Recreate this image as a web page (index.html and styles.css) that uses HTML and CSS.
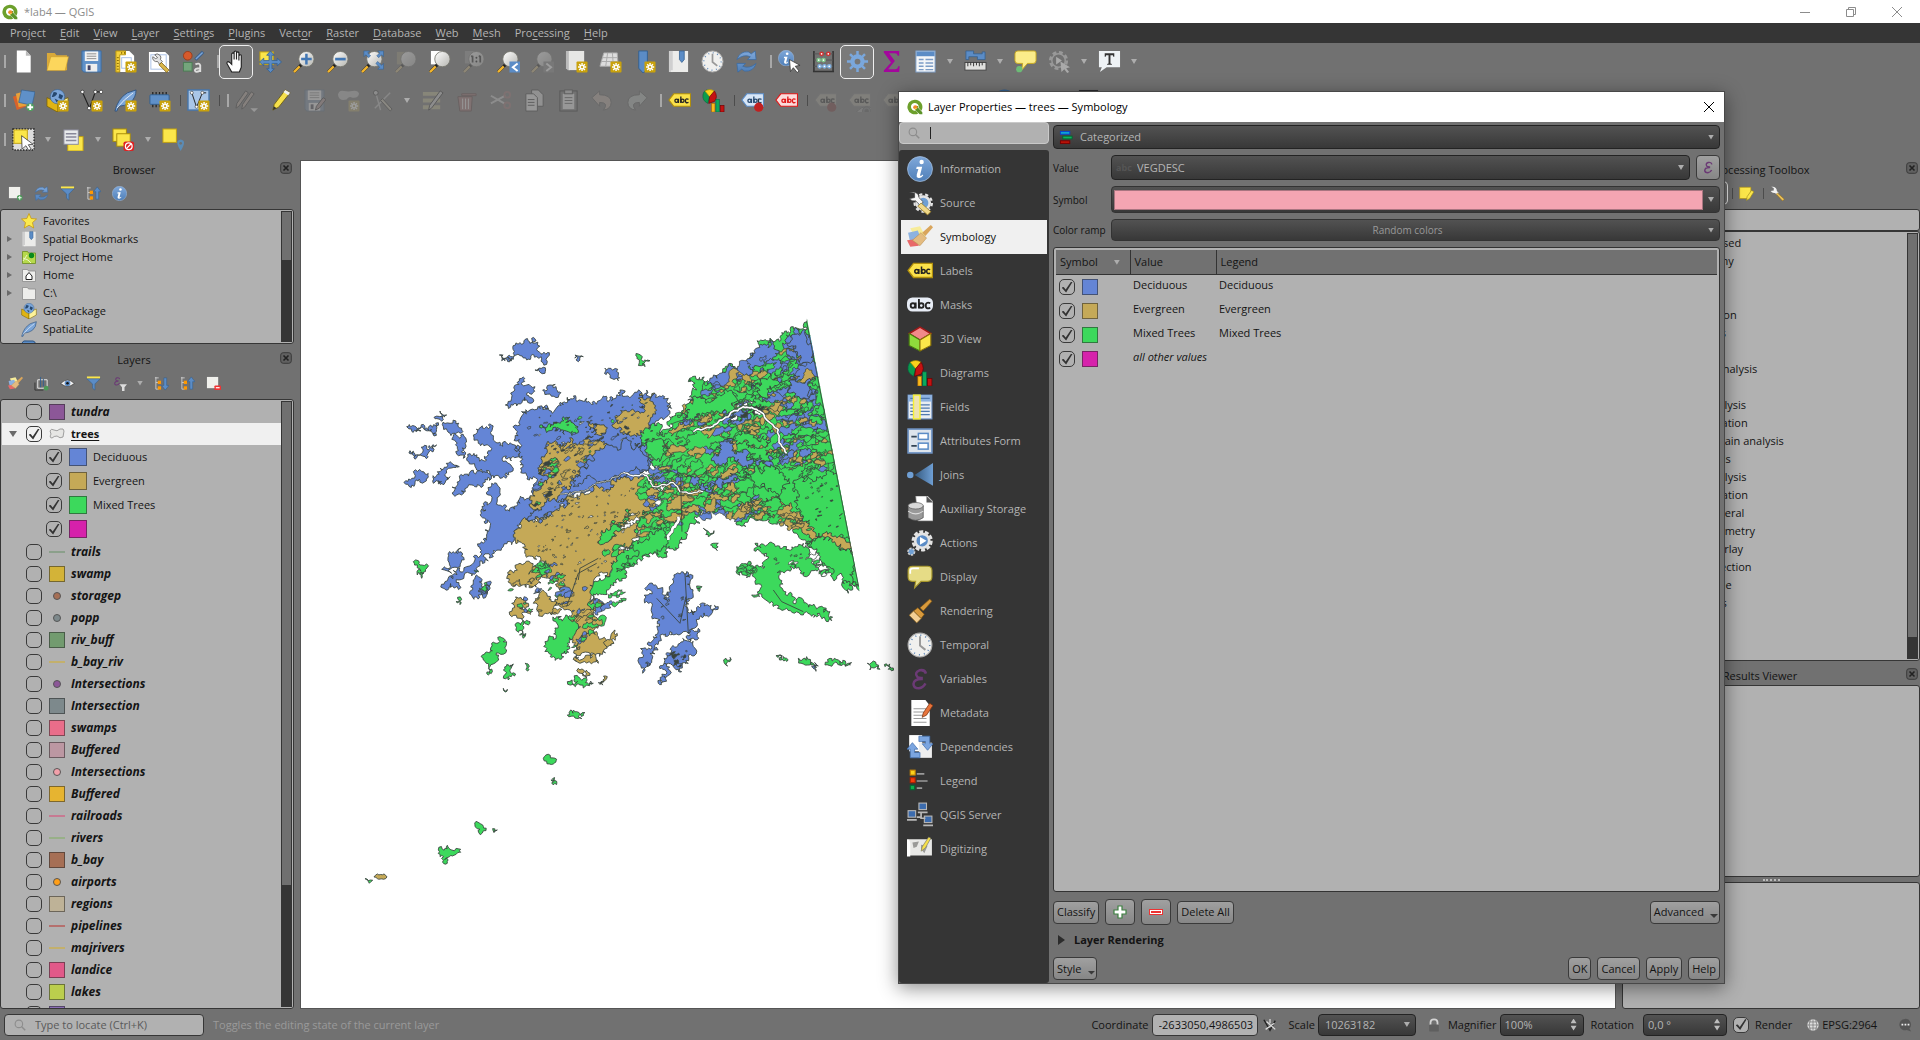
FILE: index.html
```html
<!DOCTYPE html>
<html lang="en">
<head>
<meta charset="utf-8">
<title>*lab4 — QGIS</title>
<link rel="stylesheet" href="styles.css">
</head>
<body>
<svg class="sprite" aria-hidden="true">
<defs>
<linearGradient id="lens" x1="0" y1="0" x2="1" y2="1"><stop offset="0" stop-color="#fff"/><stop offset="1" stop-color="#b5b5b0"/></linearGradient>
<linearGradient id="blueg" x1="0" y1="0" x2="0" y2="1"><stop offset="0" stop-color="#7fa8da"/><stop offset="1" stop-color="#4f7fb8"/></linearGradient>
<linearGradient id="joing" x1="0" y1="0" x2="1" y2="0"><stop offset="0" stop-color="#34597f"/><stop offset="1" stop-color="#6f9fd4"/></linearGradient>
</defs>
<symbol id="qgis" viewBox="0 0 24 24"><path d="M12 1a11 11 0 1 0 5 20.600l-4-4.200A5.800 5.800 0 1 1 17.400 13l4.200 4.500A11 11 0 0 0 12 1z" fill="#6da02c"/><path d="M12 10.500h5l-1 2 7 7.500V23h-4l-7-7z" fill="#5c9329"/><circle cx="12.500" cy="12.500" r="3.200" fill="#f08c28"/><path d="M11 14l2 2 2-2" fill="#f5d76a"/></symbol>
<symbol id="badge" viewBox="0 0 24 24"><rect x="12" y="12" width="11.500" height="11.500" rx="1" fill="#c9a20c"/><path d="M17.800 13.500v8.500M13.600 17.800h8.500M14.800 14.800l6 6M20.800 14.800l-6 6" stroke="#fff" stroke-width="1.500"/><circle cx="17.800" cy="17.800" r="1.200" fill="#c9a20c"/></symbol>
<symbol id="new" viewBox="0 0 24 24"><path d="M5 .500h9.500L19.500 6v17.500H5z" fill="#fff"/><path d="M14.500.500V6h5z" fill="#bbb"/></symbol>
<symbol id="open" viewBox="0 0 24 24"><path d="M1 3h8l2 2.500h11V21H1z" fill="#d9a93a"/><path d="M5 7h18.500L20 21.500H1z" fill="#fcd65c" stroke="#c99a2c" stroke-width=".6"/></symbol>
<symbol id="save" viewBox="0 0 24 24"><path d="M2 1h20v22H4l-2-2z" fill="#5f90c8" stroke="#3d6ea5"/><rect x="5" y="1.500" width="14" height="10" fill="#f2f2f2"/><path d="M7 4h10M7 6.500h10M7 9h10" stroke="#8c8c8c"/><rect x="6" y="14.500" width="12" height="8" fill="#eee"/><rect x="8" y="16" width="3" height="5" fill="#446"/></symbol>
<symbol id="layout" viewBox="0 0 24 24"><path d="M2 1h14l5 5v17H2z" fill="#fff"/><path d="M2 1h10v4H6v18H2z" fill="#f4cf3a" stroke="#b8940c"/><path d="M8 2v2M11 2v2M3 8h2M3 11h2M3 14h2M3 17h2M3 20h2" stroke="#886a00"/><rect x="8" y="8" width="10" height="11" fill="none" stroke="#a9c0e6"/><use href="#badge"/></symbol>
<symbol id="layoutmgr" viewBox="0 0 24 24"><path d="M1 2h17l4 4v17H1z" fill="#fff"/><rect x="3" y="5" width="16" height="15" fill="none" stroke="#a9c0e6"/><path d="M7 5a4 4 0 0 1 6 5l2 2-3 3-2-3a4 4 0 0 1-5-5l3 2 2-1z" fill="#e3e3e3" stroke="#555" stroke-width=".8"/><path d="M14 13l8 8-2.500 2.500-8-8z" fill="#d9b64a" stroke="#765b10" stroke-width=".8"/></symbol>
<symbol id="stylemgr" viewBox="0 0 24 24"><circle cx="6" cy="6" r="4.500" fill="#d65a2b" stroke="#9c3c18"/><path d="M14 10l8-8" stroke="#3a5f8c" stroke-width="3.500"/><path d="M14.500 9.500l7-7" stroke="#7ba5d8" stroke-width="1.500"/><rect x="1.500" y="13" width="9" height="9" fill="#74a57c" stroke="#4c7d55"/><path d="M14 15q4-2 5 1v7m0-4q-6 0-5.500 2.500t5.500 0" fill="none" stroke="#ddd" stroke-width="2"/></symbol>
<symbol id="hand" viewBox="0 0 24 24"><path d="M7 23l-5-9q0-3 3-1l2 2V4q1.500-2 2.500 0v6-8q1.500-2 2.500 0v8-7q1.500-2 2.500 0v8-5q2-2 2.500 0v12l-2 5z" fill="#fff" stroke="#222" stroke-width="1.200"/></symbol>
<symbol id="pansel" viewBox="0 0 24 24"><rect x="1" y="2" width="14" height="13" fill="#fbe64a" stroke="#c0a010"/><path d="M12 1l4 4.500h-2.500V11H19V8.500l4.500 4-4.500 4V14h-5.500v5.500H16L12 23.500 8 19.500h2.500V14H5v2.500L.500 12.500l4.500-4V11h5.500V5.500H8z" fill="#5b8cc6" stroke="#34608f" stroke-width=".8"/></symbol>
<symbol id="mag" viewBox="0 0 24 24"><path d="M1 23l8-8" stroke="#222" stroke-width="3"/><path d="M1 23l6-6" stroke="#f3b52c" stroke-width="2.500"/><circle cx="14" cy="9.500" r="8" fill="url(#lens)" stroke="#77776f" stroke-width=".9"/></symbol>
<symbol id="zoomin" viewBox="0 0 24 24"><use href="#mag"/><path d="M14 4v11M8.500 9.500h11" stroke="#4277b4" stroke-width="2.600"/></symbol>
<symbol id="zoomout" viewBox="0 0 24 24"><use href="#mag"/><path d="M8.500 9.500h11" stroke="#4277b4" stroke-width="2.800"/></symbol>
<symbol id="zoomfull" viewBox="0 0 24 24"><use href="#mag"/><path d="M3 1h6L7 3l3 3-2 2-3-3-2 2zM23.500 1v6l-2-2-3 3-2-2 3-3-2-2zM23.500 20h-6l2-2-4-4 2-2 4 4 2-2z" fill="#5b8cc6" stroke="#34608f" stroke-width=".6"/></symbol>
<symbol id="zoomsel" viewBox="0 0 24 24"><rect x="2" y="2" width="10" height="13" fill="#a59a50"/><use href="#mag"/></symbol>
<symbol id="zoomlayer" viewBox="0 0 24 24"><rect x="2" y="1" width="12" height="14" fill="#fff"/><use href="#mag"/></symbol>
<symbol id="zoomnative" viewBox="0 0 24 24"><rect x="2" y="1" width="10" height="13" fill="#999"/><use href="#mag"/><path d="M10 6v7M18 6v7M8.500 7L10 6M16.500 7L18 6" stroke="#222" stroke-width="1.800"/><circle cx="14" cy="8" r="1"/><circle cx="14" cy="12" r="1"/></symbol>
<symbol id="zoomlast" viewBox="0 0 24 24"><use href="#mag"/><rect x="13" y="12" width="11" height="11.500" fill="#5b8cc6"/><path d="M21.500 14l-5 4 5 4" fill="none" stroke="#fff" stroke-width="2"/></symbol>
<symbol id="zoomnext" viewBox="0 0 24 24"><use href="#mag"/><rect x="13" y="12" width="11" height="11.500" fill="#888"/><path d="M16 14l5 4-5 4" fill="none" stroke="#fff" stroke-width="2"/></symbol>
<symbol id="newmap" viewBox="0 0 24 24"><path d="M1 1h4v20H3l-2-2z" fill="#bbb"/><path d="M4 1h16v20H4z" fill="#e7e7e5"/><use href="#badge"/></symbol>
<symbol id="new3d" viewBox="0 0 24 24"><path d="M5 3h14l1 14H1z" fill="#ddd" stroke="#aaa"/><path d="M4 8h15M3 12h17M9 3L7 17M14 3l1 14" stroke="#aaa"/><use href="#badge"/></symbol>
<symbol id="newbook" viewBox="0 0 24 24"><path d="M6 1h9v19l-4.500 4-4.500-5z" fill="#5b8cc6" stroke="#34608f"/><use href="#badge"/></symbol>
<symbol id="books" viewBox="0 0 24 24"><path d="M2 1h5v22H2z" fill="#cfcfcf"/><path d="M6 1h16v22H4v-2h2z" fill="#ececea"/><path d="M13 1h5v9l-2.500 3L13 10z" fill="#5b8cc6" stroke="#34608f" stroke-width=".8"/></symbol>
<symbol id="clock" viewBox="0 0 24 24"><circle cx="12" cy="12" r="11" fill="#f0f0ee" stroke="#aaa"/><circle cx="12" cy="12" r="9" fill="none" stroke="#5c86b8" stroke-width="1.400" stroke-dasharray="1 3.710"/><path d="M12 4v8.500l5 4" fill="none" stroke="#999" stroke-width="1.800"/></symbol>
<symbol id="refresh" viewBox="0 0 24 24"><path d="M2 10q3-9 12-8l3 2 4-3 1 9h-9l3-3q-7-3-14 3zM22 14q-3 9-12 8l-3-2-4 3-1-9h9l-3 3q7 3 14-3z" fill="url(#blueg)" stroke="#3a6ba5" stroke-width=".8"/></symbol>
<symbol id="cursor" viewBox="0 0 24 24"><path d="M12 10l11 6-5 1 4 5-2 1.500-4-5-3 4z" fill="#fff" stroke="#333" stroke-width=".8"/></symbol>
<symbol id="info" viewBox="0 0 24 24"><circle cx="12" cy="12" r="11.500" fill="url(#blueg)" stroke="#a8c2e2" stroke-width=".7"/><circle cx="13.500" cy="5.500" r="2" fill="#fff"/><path d="M9 10h5l-2 8q1 1 2.500-1l.5 1q-2 3-5 2-1.500-.5-1-3l1.500-5H8.500z" fill="#fff"/></symbol>
<symbol id="identify" viewBox="0 0 24 24"><svg width="17" height="17" viewBox="0 0 24 24"><use href="#info"/></svg><use href="#cursor"/></symbol>
<symbol id="abacus" viewBox="0 0 24 24"><path d="M2 1v22M22 1v22M1 22.500h22" stroke="#333" stroke-width="1.600"/><path d="M2 4h20M2 10.500h20M2 17h20" stroke="#555"/><g stroke-width="1.600" fill="#fff"><circle cx="10" cy="4" r="1.700" stroke="#c33"/><circle cx="17" cy="4" r="1.700" stroke="#c33"/><circle cx="7" cy="10.500" r="1.700" stroke="#7fc48b"/><circle cx="12" cy="10.500" r="1.700" stroke="#7fc48b"/><circle cx="8" cy="17" r="1.700" stroke="#7fb0e0"/><circle cx="13" cy="17" r="1.700" stroke="#7fb0e0"/><circle cx="18" cy="17" r="1.700" stroke="#7fb0e0"/></g></symbol>
<symbol id="gear" viewBox="0 0 24 24"><path d="M12 1v22M1 12h22M4.200 4.200l15.600 15.600M19.800 4.200L4.200 19.800" stroke="#7aa7dc" stroke-width="2.600"/><circle cx="12" cy="12" r="7.500" fill="#7aa7dc"/><circle cx="12" cy="12" r="3" fill="#777"/></symbol>
<symbol id="sigma" viewBox="0 0 24 24"><path d="M4 1h16v5h-1.500q-.5-2.500-3-2.500H9.500l6 8-7 8.500H16q2.500 0 3-3h1.500l-.5 6H4v-1.500L11.500 13 4 2.500z" fill="#a3069c"/></symbol>
<symbol id="table" viewBox="0 0 24 24"><rect x="2" y="1" width="20" height="22" fill="#f4f6f8" stroke="#7b9cc6"/><rect x="2.500" y="1.500" width="19" height="5" fill="#5b8cc6"/><path d="M5 10h5M12 10h8M5 13.500h5M12 13.500h8M5 17h5M12 17h8M5 20.500h5M12 20.500h8" stroke="#7b9cc6" stroke-width="1.500"/></symbol>
<symbol id="measure" viewBox="0 0 24 24"><path d="M2 1h8v3h9V2h3v8h-8V7H5v3H2z" fill="#5b8cc6" stroke="#34608f" stroke-width=".8"/><rect x="1" y="13" width="22" height="8" fill="#e0e0de" stroke="#444"/><path d="M4 13v4M7 13v3M10 13v4M13 13v3M16 13v4M19 13v3" stroke="#333"/></symbol>
<symbol id="tip" viewBox="0 0 24 24"><path d="M4 1h17q2 0 2 2v8q0 3-3 3h-6l-6 7 1-7H4q-3 0-3-3V4q0-3 3-3z" fill="#fbec8a" stroke="#c8a820"/><circle cx="5.500" cy="20" r="3.300" fill="#6cbb76"/></symbol>
<symbol id="runact" viewBox="0 0 24 24"><circle cx="11" cy="11" r="8.500" fill="none" stroke="#999" stroke-width="3" stroke-dasharray="4 2.700"/><circle cx="11" cy="11" r="7" fill="none" stroke="#999" stroke-width="1.500"/><path d="M8.500 7v8l6-4z" fill="#aaa"/><path d="M13 12l10 6-4 1 3 4-2 1-3-4-3 3z" fill="#aaa"/></symbol>
<symbol id="textann" viewBox="0 0 24 24"><path d="M1 1h22v17H9l-7 5 2-5H1z" fill="#eef2f5"/><path d="M7 3.500h10v3.500h-1l-.5-1.500h-2.500v8.500l1.500.5v1h-5v-1l1.500-.5V5.500H8.500L8 7H7z" fill="#333"/></symbol>
<symbol id="datasrc" viewBox="0 0 24 24"><path d="M1 8l9-3 5 13-10 4z" fill="#d9622b"/><path d="M4 5l10-3 3 15-10 2z" fill="#e8a13a"/><path d="M10 1l14 2-3 14-14-3z" fill="#5f90c8" stroke="#34608f" stroke-width=".7"/><path d="M15 19h8M19 15v8" stroke="#52a060" stroke-width="5"/><path d="M16 19h6M19 16v6" stroke="#fff" stroke-width="2"/></symbol>
<symbol id="gpkg" viewBox="0 0 24 24"><path d="M1 9l11 5v10L1 18z" fill="#e0b414" stroke="#7c6200" stroke-width=".8"/><path d="M23 9l-11 5v10l11-6z" fill="#fdf39a" stroke="#7c6200" stroke-width=".8"/><circle cx="12" cy="8" r="7.500" fill="#7ba5d8" stroke="#34608f" stroke-width=".6"/><path d="M8 3q5 0 3 3t-5 2zM14 5l4 2-2 4-3-2zM9 10l4 2-2 2z" fill="#26486f"/></symbol>
<symbol id="gpkgnew" viewBox="0 0 24 24"><use href="#gpkg"/><use href="#badge"/></symbol>
<symbol id="shp" viewBox="0 0 24 24"><path d="M2 2l8 18L16 3h7" fill="none" stroke="#222" stroke-width="1.200"/><g fill="#fff" stroke="#333" stroke-width=".8"><circle cx="2.500" cy="3" r="1.800"/><circle cx="9.500" cy="20" r="1.800"/><circle cx="16" cy="3" r="1.800"/><circle cx="22" cy="3" r="1.800"/></g></symbol>
<symbol id="shpnew" viewBox="0 0 24 24"><use href="#shp"/><use href="#badge"/></symbol>
<symbol id="feather" viewBox="0 0 24 24"><path d="M1 23Q4 10 14 4l9-3q0 8-6 13-6 4-12 4l-2 5z" fill="#7ba5d8" stroke="#2c5280" stroke-width=".9"/><path d="M3 20Q10 11 20 4" stroke="#e8f0fa" fill="none"/></symbol>
<symbol id="feathernew" viewBox="0 0 24 24"><use href="#feather"/><use href="#badge"/></symbol>
<symbol id="chip" viewBox="0 0 24 24"><path d="M5 3v16M8.500 3v16M12 3v16M15.500 3v16M19 3v16" stroke="#222" stroke-width="1.300"/><rect x="2" y="6" width="20" height="10" rx="1" fill="#5f90c8" stroke="#34608f"/><use href="#badge"/></symbol>
<symbol id="virt" viewBox="0 0 24 24"><rect x="1" y="1" width="22" height="21" fill="#a9c6e8" stroke="#4775a8" stroke-width="1.500"/><path d="M5 4l5 15L16 4h4" fill="none" stroke="#222"/><g fill="#fff" stroke="#333" stroke-width=".6"><circle cx="5" cy="4" r="1.600"/><circle cx="10" cy="18.500" r="1.600"/><circle cx="16" cy="4" r="1.600"/></g><use href="#badge"/></symbol>
<symbol id="pencil" viewBox="0 0 24 24"><path d="M4 22l1.500-6L17 1l5 3-12 15z" fill="#f6e04b" stroke="#6e5d10" stroke-width=".9"/><path d="M17 1l5 3-2 2.500-5-3z" fill="#eee"/><path d="M4 22l1-4 3 2z" fill="#333"/></symbol>
<symbol id="pencils" viewBox="0 0 24 24"><path d="M1 20L2 15 11 2l3 2-10 14zM7 21l1-5L17 3l3 2-10 14z" fill="#c9a08a" stroke="#333"/><path d="M16 20h8l-4 4z" fill="#eee"/></symbol>
<symbol id="saveedit" viewBox="0 0 24 24"><use href="#save"/><path d="M13 22l1-4 7-9 3 2-7 9z" fill="#c88" stroke="#333"/></symbol>
<symbol id="addpoly" viewBox="0 0 24 24"><path d="M1 6q1-5 6-4t9 0q6-1 7 3-1 5-7 4-4-2-6 2-8 2-9-5z" fill="#bbb"/><use href="#badge"/></symbol>
<symbol id="vertex" viewBox="0 0 24 24"><path d="M5 4l5 18M4 20L20 4" stroke="#bbb" stroke-width="1.500"/><circle cx="5" cy="4" r="2.500" fill="#ccc" stroke="#333"/><path d="M12 10l10 11-2 2L10 12z" fill="#cb8" stroke="#333"/></symbol>
<symbol id="multi" viewBox="0 0 24 24"><path d="M2 3h18v4H2zM2 10h18v4H2zM2 17h18v4H2z" fill="#c8b850"/><path d="M8 22l1-5L20 2l3 2-12 16z" fill="#ccc" stroke="#222"/></symbol>
<symbol id="trash" viewBox="0 0 24 24"><path d="M3 8h15l-1 15H5zM7 5h15v2H7z" fill="#d66" stroke="#733"/><path d="M8 10v11M11 10v11M14 10v11" stroke="#eee"/></symbol>
<symbol id="cut" viewBox="0 0 24 24"><path d="M2 7l14 8M2 15l15-8" stroke="#ccc" stroke-width="2"/><circle cx="19" cy="6" r="3" fill="none" stroke="#c66" stroke-width="2"/><circle cx="19" cy="17" r="3" fill="none" stroke="#c66" stroke-width="2"/></symbol>
<symbol id="copy" viewBox="0 0 24 24"><path d="M9 1h7l5 5v12H9z" fill="#ddd" stroke="#333"/><path d="M3 5h8l4 4v14H3z" fill="#eee" stroke="#333"/><path d="M5 11h7M5 14h7M5 17h7" stroke="#333"/></symbol>
<symbol id="paste" viewBox="0 0 24 24"><rect x="3" y="2" width="18" height="21" fill="#777" stroke="#222"/><rect x="6" y="5" width="12" height="16" fill="#eee"/><path d="M8 9h8M8 12h8M8 15h8" stroke="#555"/><rect x="8" y="1" width="8" height="4" fill="#ccc" stroke="#333"/></symbol>
<symbol id="undo" viewBox="0 0 24 24"><path d="M1 9l8-7v4q12 0 12 8 0 7-8 8 6-8-4-8v4z" fill="#c8a48a" stroke="#555"/></symbol>
<symbol id="redo" viewBox="0 0 24 24"><path d="M23 9l-8-7v4Q3 6 3 14q0 7 8 8-6-8 4-8v4z" fill="#a9bcae" stroke="#555"/></symbol>
<symbol id="tag" viewBox="0 0 24 24"><path d="M1 11.500L6 5h17.500v13H6z" stroke="currentColor" stroke-width="1.200"/><g fill="none" stroke-width="1.400"><circle cx="8.900" cy="12.300" r="1.700"/><path d="M10.900 10.200V14.700M13.400 7.800v6.900M21.400 10.700q-3.200-1.300-3.200 1.600t3.200 1.700"/><circle cx="15.100" cy="12.300" r="1.700"/></g></symbol>
<symbol id="diagram" viewBox="0 0 24 24"><path d="M8 8V1Q2 0 1 6t5 9z" fill="#0c9b4c" stroke="#064" stroke-width=".6"/><path d="M8 8L3 2q5-3 10 0z" fill="#fbd21c" stroke="#a80" stroke-width=".6"/><path d="M8 8l5-6q4 6 0 11l-6 2z" fill="#c41212" stroke="#600" stroke-width=".6"/><rect x="10" y="15" width="3.500" height="9" fill="#fbb91c" stroke="#a60" stroke-width=".6"/><rect x="14.500" y="11" width="3.500" height="13" fill="#0cab5c" stroke="#064" stroke-width=".6"/><rect x="19" y="17" width="4" height="7" fill="#c41212" stroke="#600" stroke-width=".6"/></symbol>
<symbol id="pin" viewBox="0 0 24 24"><path d="M18 10v9" stroke="#333"/><circle cx="18.500" cy="19" r="4.800" fill="#c02020" stroke="none"/></symbol>
<symbol id="eye" viewBox="0 0 24 24"><path d="M1 12q11-11 22 0-11 9-22 0z" fill="#f0f0f0" stroke="#333"/><circle cx="12" cy="11.500" r="4.500" fill="#5b8cc6"/><circle cx="12" cy="11.500" r="2" fill="#111"/></symbol>
<symbol id="select" viewBox="0 0 24 24"><rect x="1" y="1" width="22" height="22" fill="#ddd" stroke="#222" stroke-width="1.400" stroke-dasharray="1.500 1.500"/><rect x="2" y="2" width="14" height="14" fill="#fbe64a" stroke="#c0a010"/><path d="M10 8l12 9-5 .5 3 4.500-2.500 1.500-3-5-4 3.500z" fill="#fff" stroke="#333" stroke-width=".8"/></symbol>
<symbol id="selform" viewBox="0 0 24 24"><rect x="6" y="9" width="16" height="15" fill="#fbe64a" stroke="#c0a010"/><rect x="2" y="2" width="15" height="15" fill="#e8eaec" stroke="#889"/><path d="M4 6h11M4 9.500h11M4 13h11" stroke="#889" stroke-width="1.600"/></symbol>
<symbol id="desel" viewBox="0 0 24 24"><rect x="1" y="1" width="14" height="13" fill="#fbe64a" stroke="#a88c08"/><rect x="5" y="6" width="14" height="13" fill="#fbe64a" stroke="#a88c08"/><rect x="12" y="14" width="11" height="10" rx="2" fill="#d22"/><circle cx="17.500" cy="19" r="3.500" fill="none" stroke="#fff" stroke-width="1.300"/><path d="M15 21.500l5-5" stroke="#fff" stroke-width="1.300"/></symbol>
<symbol id="selloc" viewBox="0 0 24 24"><rect x="1" y="1" width="14" height="14" fill="#fbe64a" stroke="#c0a010"/><path d="M19.500 24q-7-11 0-12 7 1 0 12z" fill="#5b8cb6"/><circle cx="19.500" cy="16" r="1.400" fill="#717171"/></symbol>
<symbol id="panelicon" viewBox="0 0 24 24"><rect x="2" y="1" width="20" height="21" fill="#2c2c30"/></symbol>
<symbol id="webglobe" viewBox="0 0 24 24"><circle cx="12" cy="12" r="11.500" fill="#34608f"/><circle cx="12" cy="12" r="9" fill="#7ba5d8"/></symbol>
<symbol id="addbox" viewBox="0 0 16 16"><rect x="1" y="1" width="12" height="12" fill="#f0f0ec"/><circle cx="12.500" cy="12.500" r="3" fill="#4c9a58"/><path d="M10.500 12.500h4M12.500 10.500v4" stroke="#fff"/></symbol>
<symbol id="rembox" viewBox="0 0 16 16"><rect x="1" y="1" width="12" height="12" fill="#f0f0ec"/><rect x="9" y="10" width="7" height="5" rx="1" fill="#e33"/><path d="M10.500 12.500h4" stroke="#fff" stroke-width="1.300"/></symbol>
<symbol id="funnel" viewBox="0 0 16 16"><path d="M1 3h14L9.500 8.500V15L7 13V8.500z" fill="#5b8cc6" stroke="#34608f" stroke-width=".6"/><path d="M1 1.500h14" stroke="#fbe64a" stroke-width="2"/></symbol>
<symbol id="collapse" viewBox="0 0 16 16"><path d="M2 1v13h3M2 7h3M1 2h4" stroke="#ccc" fill="none"/><rect x="4" y="5" width="3.500" height="3.500" fill="#f90"/><rect x="4" y="11" width="3.500" height="3.500" fill="#f90"/><path d="M12 1l4 5h-2.500v8h-3V6H8z" fill="#5b8cc6" stroke="#34608f" stroke-width=".6"/></symbol>
<symbol id="expand" viewBox="0 0 16 16"><path d="M2 1v13h3M2 7h3M1 2h4" stroke="#ccc" fill="none"/><rect x="4" y="5" width="3.500" height="3.500" fill="#f90"/><rect x="4" y="11" width="3.500" height="3.500" fill="#f90"/><path d="M12 15l4-5h-2.500V2h-3v8H8z" fill="#5b8cc6" stroke="#34608f" stroke-width=".6"/></symbol>
<symbol id="brush" viewBox="0 0 24 24"><path d="M21 1l2 2-8 9-3-3z" fill="#d99a3c" stroke="#7c5210" stroke-width=".6"/><path d="M10 9l6 6-3 4-7-7z" fill="#d99a3c" stroke="#7c5210" stroke-width=".6"/><path d="M6 12l7 7-4 4-7-7z" fill="#f3cf94" stroke="#8c6420" stroke-width=".7"/></symbol>
<symbol id="symbology" viewBox="0 0 24 24"><path d="M3 4l9-2 5 9-8 5z" fill="#f7ec9a"/><path d="M1 8l9-2 3 8-10 3z" fill="#8db2e0"/><path d="M0 15l8-1 3 6-8 1z" fill="#e86868"/><path d="M22 1l2 2-7 8-3-3z" fill="#d9a55c"/><path d="M13 8l5 5-6 7-7-5z" fill="#e4bb80" stroke="#b78b48" stroke-width=".5"/></symbol>
<symbol id="group" viewBox="0 0 16 16"><path d="M4 4h10v9H4z" fill="none" stroke="#eee"/><path d="M1 7v8h9" fill="none" stroke="#333"/><path d="M7 1v11M10 3v8" stroke="#34608f"/><circle cx="13" cy="13" r="2.500" fill="#4c9a58"/></symbol>
<symbol id="eps" viewBox="0 0 24 24"><path d="M17.500 7q-1-4-6-3-5 2-2 6 1 1 4 1v1q-7 0-7.500 4.500 0 4 5 4 4-.500 6-4.500" fill="none" stroke="#6b3a75" stroke-width="2.300"/></symbol>
<symbol id="epsf" viewBox="0 0 24 24"><svg width="17" height="17" viewBox="0 0 24 24"><use href="#eps"/></svg><path d="M12 13h12l-4 5v6h-4v-6z" fill="#ddd"/></symbol>
<symbol id="star" viewBox="0 0 16 16"><path d="M8 .5l2.200 5 5.300.5-4 3.600 1.200 5.400L8 12.200 3.300 15l1.200-5.400-4-3.600 5.300-.5z" fill="#fbe94e" stroke="#c99a0c" stroke-width=".8"/></symbol>
<symbol id="folder" viewBox="0 0 16 16"><path d="M1.500 2.500h5l1 1.500h7v10.500h-13z" fill="#ededeb" stroke="#8c8c8c" stroke-width=".8"/></symbol>
<symbol id="homef" viewBox="0 0 16 16"><use href="#folder"/><path d="M5 9l3-3.500L11 9v3.500H5z" fill="#fff" stroke="#222"/></symbol>
<symbol id="projf" viewBox="0 0 16 16"><path d="M1.500 2.500h5l1 1.500h7v10.500h-13z" fill="#b6d94c" stroke="#6c8c20" stroke-width=".8"/><path d="M2 9l5 2 3 3M6 6l-4 6" stroke="#eef6c8" fill="none"/><circle cx="10.500" cy="6.500" r="2.700" fill="#0a8a1c"/></symbol>
<symbol id="elephant" viewBox="0 0 16 16"><path d="M1 16V4q1-3 5-2h6q4 0 3 14z" fill="#5b8cc6" stroke="#2c5280"/></symbol>
<symbol id="polyicon" viewBox="0 0 16 16"><path d="M1 5q1-3 4-1t6-1q4-1 4 2l-1 6q-3 2-6-1-3 0-5 2-3 0-1-4z" fill="#e6e6e4" stroke="#8c8c8c" stroke-width=".8"/></symbol>
<symbol id="closex" viewBox="0 0 12 12"><rect x=".7" y=".7" width="10.600" height="10.600" rx="2.500" fill="#606060" stroke="#3a3a3a"/><path d="M3.500 3.500l5 5M8.500 3.500l-5 5" stroke="#222" stroke-width="1.600"/></symbol>
<symbol id="search" viewBox="0 0 16 16"><circle cx="6.500" cy="6.500" r="5" fill="none" stroke="#8d8d8d" stroke-width="1.500"/><path d="M10 10l5 5" stroke="#8d8d8d" stroke-width="2"/></symbol>
<symbol id="source" viewBox="0 0 24 24"><circle cx="15" cy="12" r="6" fill="#6f9fd4" stroke="#e4e4e4" stroke-width="2.500"/><circle cx="15" cy="12" r="8" fill="none" stroke="#e4e4e4" stroke-width="2" stroke-dasharray="3 2.600"/><path d="M2 2l5 1v4l-5 1q3 3 6 2l4 4 3-3-4-4q0-6-9-5z" fill="#f5f5f5" stroke="#353535" stroke-width=".6"/><path d="M13 12l9 8-3 3-9-8z" fill="#f0d888" stroke="#987a20" stroke-width=".7"/></symbol>
<symbol id="mask" viewBox="0 0 24 24"><rect x="0" y="5" width="24" height="13" rx="5" fill="#e8edf6"/><g fill="none" stroke="#222" stroke-width="1.700"><circle cx="5.500" cy="12.500" r="2.100"/><path d="M8 9.800V15.300M11 6.500v8.800M21.500 10.300q-4.200-1.500-4.200 2.200t4.200 2.200"/><circle cx="13.200" cy="12.500" r="2.100"/></g></symbol>
<symbol id="cube" viewBox="0 0 24 24"><path d="M12 1l10 6-10 6L2 7z" fill="#f28a8a" stroke="#a01818" stroke-width="1.400"/><path d="M2 7l10 6v10L2 18z" fill="#8fdc3c" stroke="#487c10"/><path d="M22 7l-10 6v10l10-5z" fill="#fbe64a" stroke="#8c7408"/></symbol>
<symbol id="fields" viewBox="0 0 24 24"><rect x="1" y="1" width="22" height="22" fill="#e9edf2" stroke="#6f93c4"/><path d="M1 1h22v6H1z" fill="#8db2e0"/><path d="M3 4h18M3 10h18M3 13h18M3 16h18M3 19h18" stroke="#4f79ae"/><rect x="6" y="1" width="6" height="22" fill="#eee3b0" stroke="#f6ee30" stroke-width="1.300"/></symbol>
<symbol id="form" viewBox="0 0 24 24"><rect x="1" y="1" width="22" height="22" fill="#dde4ec" stroke="#6f93c4" stroke-width="1.500"/><path d="M4 8h5M4 16.500h5" stroke="#345" stroke-width="1.600"/><rect x="10.500" y="5" width="9" height="5.500" fill="#fff" stroke="#5b8cc6" stroke-width="1.400"/><rect x="10.500" y="14" width="9" height="5.500" fill="#fff" stroke="#5b8cc6" stroke-width="1.400"/></symbol>
<symbol id="join" viewBox="0 0 24 24"><circle cx="3" cy="12" r="3" fill="#6f9fd4"/><path d="M7 12L24 1v21z" fill="url(#joing)"/></symbol>
<symbol id="storage" viewBox="0 0 24 24"><path d="M8 0h11l5 5v18H10z" fill="#fff" stroke="#777" stroke-width=".6"/><path d="M18 0v6h6z" fill="#555"/><path d="M1 9v11q7 5 14 0V9z" fill="#999" stroke="#444" stroke-width=".6"/><ellipse cx="8" cy="9" rx="7" ry="3" fill="#d8d8d8" stroke="#555" stroke-width=".6"/><path d="M1 14q7 5 14 0" fill="none" stroke="#ddd"/></symbol>
<symbol id="actions" viewBox="0 0 24 24"><circle cx="14" cy="10" r="8.500" fill="none" stroke="#e4e4e4" stroke-width="2.500" stroke-dasharray="3.700 1.600"/><circle cx="14" cy="10" r="6.500" fill="#5b8cc6" stroke="#e4e4e4" stroke-width="2.500"/><path d="M12 6.500v7l6-3.500z" fill="#fff"/><circle cx="4" cy="20" r="3" fill="#6f9fd4" stroke="#ccc" stroke-width="1.500" stroke-dasharray="2 1"/></symbol>
<symbol id="bubble" viewBox="0 0 24 24"><path d="M5 2h14q4 0 4 4v6q0 4-4 4h-6l-6 6 1-6H5q-4 0-4-4V6q0-4 4-4z" fill="#e6dc86" stroke="#a8982c"/><path d="M3 9V6q0-2 3-2h5" fill="none" stroke="#fff" stroke-width="1.600"/></symbol>
<symbol id="meta" viewBox="0 0 24 24"><path d="M4 0h13l4 5v19H4z" fill="#fff"/><path d="M6 8h12M6 11h10M6 14h9M6 17h12M6 20.500h12" stroke="#999"/><path d="M14 16l1-4 6-9 3 2-6 9z" fill="#e8743c" stroke="#7c3410" stroke-width=".7"/></symbol>
<symbol id="deps" viewBox="0 0 24 24"><rect x="2" y="1" width="12" height="15" fill="#fff"/><rect x="11" y="8" width="12" height="14" fill="#eee"/><path d="M11 2h10v7h3l-5 6-5-6h3V7h-6zM5 8l5 6H7v3h5v5H3v-8H0z" fill="#7ba5e0" stroke="#4470b0" stroke-width=".7"/></symbol>
<symbol id="legend" viewBox="0 0 24 24"><rect x="3" y="2" width="4.500" height="4.500" fill="#fbd21c" stroke="#c80"/><rect x="3" y="9" width="4.500" height="4.500" fill="#f43c0c" stroke="#a20"/><rect x="3" y="16" width="4" height="4" fill="#0cab4c" stroke="#063"/><path d="M9 5.500h7M9 12h10M9 18.500h5" stroke="#999" stroke-width="1.600"/></symbol>
<symbol id="server" viewBox="0 0 24 24"><g fill="#3c6cae" stroke="#b8b8b8"><rect x="11" y="1" width="7" height="6"/><rect x="1" y="8" width="7" height="6"/><rect x="16" y="13" width="7" height="6"/></g><path d="M10 9.500h9M0 16.500h9M15 21.500h9M13 10v5h4M9 14h4" stroke="#b8b8b8" stroke-width="1.600" fill="none"/></symbol>
<symbol id="digit" viewBox="0 0 24 24"><path d="M1 3h22v15H1z" fill="#e8e8e6"/><path d="M1 3q2 1 2 4v12H0V3z" fill="#fff"/><path d="M5 6l6-1-2 5-3 1zM13 8l6 1-3 7-3-4z" fill="#9a9a98"/><path d="M13 14l1-4 6-9 2 1-5 9z" fill="#f6e04b" stroke="#776" stroke-width=".6"/></symbol>
<symbol id="categ" viewBox="0 0 16 16"><rect x="1.500" y="1.500" width="10" height="3" fill="#0ca4d4" stroke="#0a40d0"/><rect x="4" y="6.500" width="10" height="3" fill="#0cb45c" stroke="#066030"/><rect x="1.500" y="11.500" width="10" height="3" fill="#b81208" stroke="#700"/></symbol>
<symbol id="plus" viewBox="0 0 16 16"><path d="M6 2h4v4h4v4h-4v4H6v-4H2V6h4z" fill="#fff" stroke="#3c8040" stroke-width="1.200"/></symbol>
<symbol id="minus" viewBox="0 0 16 16"><rect x="1.500" y="5.500" width="13" height="5" fill="#fff" stroke="#e33"/><path d="M3 8h10" stroke="#e33" stroke-width="2"/></symbol>
<symbol id="wrench" viewBox="0 0 24 24"><path d="M2 1l4 2v4l-5 1q3 4 7 3l3 3 3-3-3-3q0-6-6-7z" fill="#f2f2f2"/><path d="M12 11l11 10-3 3L10 13z" fill="#e8bf58" stroke="#8a6410" stroke-width=".8"/></symbol>
<symbol id="noteedit" viewBox="0 0 24 24"><path d="M1 2h18v15l-5 3H1z" fill="#fbe64a" stroke="#b09010"/><path d="M12 23l1-6 7-10 4 2-7 11z" fill="#fbe64a" stroke="#99861c"/></symbol>
<symbol id="lock" viewBox="0 0 16 16"><path d="M4 8V5q0-3.500 4-3.500T12 5v3" fill="none" stroke="#d4d4d4" stroke-width="2"/><rect x="2.500" y="7.500" width="11" height="8" rx="1" fill="#5f5f5f"/></symbol>
<symbol id="globe" viewBox="0 0 16 16"><circle cx="8" cy="8" r="6.500" fill="#ddd"/><path d="M1.500 8h13M8 1.500v13M3 4.500h10M3 11.500h10M5 2.500q-3 5.500 0 11M11 2.500q3 5.500 0 11" fill="none" stroke="#666" stroke-width=".7"/></symbol>
<symbol id="msgs" viewBox="0 0 16 16"><path d="M8 1a6.500 6.500 0 1 0 2 12.700l5 1.800-2-3.500A6.500 6.500 0 0 0 8 1z" fill="#555"/><path d="M4 7.500h2M7.500 7.500h2M11 7.500h2" stroke="#eee" stroke-width="2"/></symbol>
<symbol id="tracker" viewBox="0 0 16 16"><path d="M1 2l7 12L14 3" fill="none" stroke="#222" stroke-width="1.600"/><path d="M4 4l10 9M13 6L3 13M8 1v5" stroke="#ddd" stroke-width="1.400"/></symbol>
</svg>

<header class="titlebar">
  <svg class="logo"><use href="#qgis"/></svg>
  <span class="title">*lab4 — QGIS</span>
  <div class="winctl">
    <button aria-label="Minimize"><svg viewBox="0 0 10 10"><path d="M0 5.500h10"/></svg></button>
    <button aria-label="Restore"><svg viewBox="0 0 10 10"><path d="M.500 2.500h7v7h-7zM2.500 2.500v-2h7v7h-2"/></svg></button>
    <button aria-label="Close"><svg viewBox="0 0 10 10"><path d="M0 0l10 10M10 0L0 10"/></svg></button>
  </div>
</header>

<nav class="menubar">
  <button>Pro<u>j</u>ect</button><button><u>E</u>dit</button><button><u>V</u>iew</button><button><u>L</u>ayer</button><button><u>S</u>ettings</button><button><u>P</u>lugins</button><button>Vect<u>o</u>r</button><button><u>R</u>aster</button><button><u>D</u>atabase</button><button><u>W</u>eb</button><button><u>M</u>esh</button><button>Pro<u>c</u>essing</button><button><u>H</u>elp</button>
</nav>

<div class="toolbars">
  <div class="toolrow">
    <i class="grip first"></i>
    <button class="tool" aria-label="New Project"><svg><use href="#new"/></svg></button>
    <button class="tool" aria-label="Open Project"><svg><use href="#open"/></svg></button>
    <button class="tool" aria-label="Save Project"><svg><use href="#save"/></svg></button>
    <button class="tool" aria-label="New Print Layout"><svg><use href="#layout"/></svg></button>
    <button class="tool" aria-label="Layout Manager"><svg><use href="#layoutmgr"/></svg></button>
    <button class="tool" aria-label="Style Manager"><svg><use href="#stylemgr"/></svg></button>
    <i class="grip"></i>
    <button class="tool pressed" aria-label="Pan Map"><svg><use href="#hand"/></svg></button>
    <button class="tool" aria-label="Pan to Selection"><svg><use href="#pansel"/></svg></button>
    <button class="tool" aria-label="Zoom In"><svg><use href="#zoomin"/></svg></button>
    <button class="tool" aria-label="Zoom Out"><svg><use href="#zoomout"/></svg></button>
    <button class="tool" aria-label="Zoom Full"><svg><use href="#zoomfull"/></svg></button>
    <button class="tool" disabled aria-label="Zoom to Selection"><svg><use href="#zoomsel"/></svg></button>
    <button class="tool" aria-label="Zoom to Layer"><svg><use href="#zoomlayer"/></svg></button>
    <button class="tool" disabled aria-label="Zoom to Native Resolution"><svg><use href="#zoomnative"/></svg></button>
    <button class="tool" aria-label="Zoom Last"><svg><use href="#zoomlast"/></svg></button>
    <button class="tool" disabled aria-label="Zoom Next"><svg><use href="#zoomnext"/></svg></button>
    <button class="tool" aria-label="New Map View"><svg><use href="#newmap"/></svg></button>
    <button class="tool" aria-label="New 3D Map View"><svg><use href="#new3d"/></svg></button>
    <button class="tool" aria-label="New Bookmark"><svg><use href="#newbook"/></svg></button>
    <button class="tool" aria-label="Show Bookmarks"><svg><use href="#books"/></svg></button>
    <button class="tool" aria-label="Temporal Controller"><svg><use href="#clock"/></svg></button>
    <button class="tool" aria-label="Refresh"><svg><use href="#refresh"/></svg></button>
    <i class="grip"></i>
    <button class="tool" aria-label="Identify"><svg><use href="#identify"/></svg></button>
    <button class="tool" aria-label="Field Calculator"><svg><use href="#abacus"/></svg></button>
    <button class="tool pressed" aria-label="Processing Toolbox"><svg><use href="#gear"/></svg></button>
    <button class="tool" aria-label="Statistics"><svg><use href="#sigma"/></svg></button>
    <button class="tool" aria-label="Attribute Table"><svg><use href="#table"/></svg></button>
    <i class="drop"></i>
    <button class="tool" aria-label="Measure"><svg><use href="#measure"/></svg></button>
    <i class="drop"></i>
    <button class="tool" aria-label="Map Tips"><svg><use href="#tip"/></svg></button>
    <button class="tool" aria-label="Run Action"><svg><use href="#runact"/></svg></button>
    <i class="drop"></i>
    <button class="tool" aria-label="Text Annotation"><svg><use href="#textann"/></svg></button>
    <i class="drop"></i>
  </div>
  <div class="toolrow">
    <i class="grip first"></i>
    <button class="tool" aria-label="Data Source Manager"><svg><use href="#datasrc"/></svg></button>
    <button class="tool" aria-label="New GeoPackage Layer"><svg><use href="#gpkgnew"/></svg></button>
    <button class="tool" aria-label="New Shapefile Layer"><svg><use href="#shpnew"/></svg></button>
    <button class="tool" aria-label="New SpatiaLite Layer"><svg><use href="#feathernew"/></svg></button>
    <button class="tool" aria-label="New Scratch Layer"><svg><use href="#chip"/></svg></button>
    <i class="sep"></i>
    <button class="tool" aria-label="New Virtual Layer"><svg><use href="#virt"/></svg></button>
    <i class="sep"></i>
    <i class="grip"></i>
    <button class="tool" disabled aria-label="Current Edits"><svg><use href="#pencils"/></svg></button>
    <button class="tool" aria-label="Toggle Editing"><svg><use href="#pencil"/></svg></button>
    <button class="tool" disabled aria-label="Save Edits"><svg><use href="#saveedit"/></svg></button>
    <button class="tool" disabled aria-label="Add Polygon"><svg><use href="#addpoly"/></svg></button>
    <button class="tool" disabled aria-label="Vertex Tool"><svg><use href="#vertex"/></svg></button>
    <i class="drop"></i>
    <button class="tool" disabled aria-label="Modify Attributes"><svg><use href="#multi"/></svg></button>
    <button class="tool" disabled aria-label="Delete Selected"><svg><use href="#trash"/></svg></button>
    <button class="tool" disabled aria-label="Cut"><svg><use href="#cut"/></svg></button>
    <button class="tool" disabled aria-label="Copy"><svg><use href="#copy"/></svg></button>
    <button class="tool" disabled aria-label="Paste"><svg><use href="#paste"/></svg></button>
    <button class="tool" disabled aria-label="Undo"><svg><use href="#undo"/></svg></button>
    <button class="tool" disabled aria-label="Redo"><svg><use href="#redo"/></svg></button>
    <i class="grip"></i>
    <button class="tool tag-yellow" aria-label="Labeling Options"><svg><use href="#tag"/></svg></button>
    <button class="tool" aria-label="Diagram Options"><svg><use href="#diagram"/></svg></button>
    <i class="sep"></i>
    <button class="tool tag-blue" aria-label="Highlight Pinned Labels"><svg viewBox="0 0 24 24"><use href="#tag"/><use href="#pin"/></svg></button>
    <button class="tool tag-red" aria-label="Toggle Unplaced Labels"><svg><use href="#tag"/></svg></button>
    <i class="sep"></i>
    <button class="tool tag-grey" disabled aria-label="Pin Labels"><svg viewBox="0 0 24 24"><use href="#tag"/><use href="#pin"/></svg></button>
    <button class="tool tag-grey" disabled aria-label="Show Labels"><svg viewBox="0 0 24 24"><use href="#tag"/><svg x="8" y="12" width="15" height="14"><use href="#eye"/></svg></svg></button>
    <button class="tool tag-grey" disabled aria-label="Move Label"><svg><use href="#tag"/></svg></button>
    <button class="tool tag-grey" disabled aria-label="Rotate Label"><svg><use href="#tag"/></svg></button>
    <button class="tool tag-grey" disabled aria-label="Change Label"><svg><use href="#tag"/></svg></button>
    <i class="grip"></i>
    <button class="tool" aria-label="MetaSearch"><svg><use href="#webglobe"/></svg></button>
    <button class="tool tag-grey" disabled aria-label="Help"><svg><use href="#tag"/></svg></button>
    <i class="drop"></i>
    <button class="tool" aria-label="Console"><svg><use href="#panelicon"/></svg></button>
  </div>
  <div class="toolrow">
    <i class="grip first"></i>
    <button class="tool" aria-label="Select Features"><svg><use href="#select"/></svg></button>
    <i class="drop"></i>
    <button class="tool" aria-label="Select by Value"><svg><use href="#selform"/></svg></button>
    <i class="drop"></i>
    <button class="tool" aria-label="Deselect"><svg><use href="#desel"/></svg></button>
    <i class="drop"></i>
    <button class="tool" aria-label="Select by Location"><svg><use href="#selloc"/></svg></button>
  </div>
</div>

<main class="workspace">
  <aside class="dock dock-left">
    <section class="panel">
      <div class="panel-head"><h2>Browser</h2><button class="close" aria-label="Close Browser"><svg><use href="#closex"/></svg></button></div>
      <div class="minibar">
        <button aria-label="Add"><svg><use href="#addbox"/></svg></button><button aria-label="Refresh"><svg><use href="#refresh"/></svg></button><button aria-label="Filter"><svg><use href="#funnel"/></svg></button><button aria-label="Collapse"><svg><use href="#collapse"/></svg></button><button aria-label="Properties"><svg><use href="#info"/></svg></button>
      </div>
      <div class="box browser-box">
        <ul class="browser">
          <li><i class="tw none"></i><svg><use href="#star"/></svg>Favorites</li>
          <li><i class="tw"></i><svg><use href="#books"/></svg>Spatial Bookmarks</li>
          <li><i class="tw"></i><svg><use href="#projf"/></svg>Project Home</li>
          <li><i class="tw"></i><svg><use href="#homef"/></svg>Home</li>
          <li><i class="tw"></i><svg><use href="#folder"/></svg>C:\</li>
          <li><i class="tw none"></i><svg><use href="#gpkg"/></svg>GeoPackage</li>
          <li><i class="tw none"></i><svg><use href="#feather"/></svg>SpatiaLite</li>
          <li><i class="tw none"></i><svg><use href="#elephant"/></svg></li>
        </ul>
        <div class="scroll"><i class="thumb t-browser"></i></div>
      </div>
    </section>
    <section class="panel layers-panel">
      <div class="panel-head"><h2>Layers</h2><button class="close" aria-label="Close Layers"><svg><use href="#closex"/></svg></button></div>
      <div class="minibar">
        <button aria-label="Layer Styling"><svg><use href="#symbology"/></svg></button><button aria-label="Add Group"><svg><use href="#group"/></svg></button><button aria-label="Map Themes"><svg><use href="#eye"/></svg></button><button aria-label="Filter Legend"><svg><use href="#funnel"/></svg></button><button aria-label="Filter by Expression"><svg><use href="#epsf"/></svg></button><i class="drop"></i><button aria-label="Expand All"><svg><use href="#expand"/></svg></button><button aria-label="Collapse All"><svg><use href="#collapse"/></svg></button><button aria-label="Remove Layer"><svg><use href="#rembox"/></svg></button>
      </div>
      <div class="box grow">
        <div class="layers">
          <label class="lrow"><input type="checkbox"><i class="sw purple"></i>tundra</label>
          <label class="lrow active"><i class="tw open"></i><input type="checkbox" checked><svg><use href="#polyicon"/></svg><u>trees</u></label>
          <label class="lrow sub"><input type="checkbox" checked><i class="sw blue"></i>Deciduous</label>
          <label class="lrow sub"><input type="checkbox" checked><i class="sw tan"></i>Evergreen</label>
          <label class="lrow sub"><input type="checkbox" checked><i class="sw green"></i>Mixed Trees</label>
          <label class="lrow sub"><input type="checkbox" checked aria-label="all other values"><i class="sw magenta"></i></label>
          <label class="lrow"><input type="checkbox"><i class="ln sage"></i>trails</label>
          <label class="lrow"><input type="checkbox"><i class="sw mustard"></i>swamp</label>
          <label class="lrow"><input type="checkbox"><i class="pt brown"></i>storagep</label>
          <label class="lrow"><input type="checkbox"><i class="pt slate"></i>popp</label>
          <label class="lrow"><input type="checkbox"><i class="sw moss"></i>riv_buff</label>
          <label class="lrow"><input type="checkbox"><i class="ln sand"></i>b_bay_riv</label>
          <label class="lrow"><input type="checkbox"><i class="pt purple"></i>Intersections</label>
          <label class="lrow"><input type="checkbox"><i class="sw slate"></i>Intersection</label>
          <label class="lrow"><input type="checkbox"><i class="sw pink"></i>swamps</label>
          <label class="lrow"><input type="checkbox"><i class="sw mauve"></i>Buffered</label>
          <label class="lrow"><input type="checkbox"><i class="pt rose"></i>Intersections</label>
          <label class="lrow"><input type="checkbox"><i class="sw amber"></i>Buffered</label>
          <label class="lrow"><input type="checkbox"><i class="ln berry"></i>railroads</label>
          <label class="lrow"><input type="checkbox"><i class="ln leaf"></i>rivers</label>
          <label class="lrow"><input type="checkbox"><i class="sw brown"></i>b_bay</label>
          <label class="lrow"><input type="checkbox"><i class="pt orange"></i>airports</label>
          <label class="lrow"><input type="checkbox"><i class="sw beige"></i>regions</label>
          <label class="lrow"><input type="checkbox"><i class="ln brick"></i>pipelines</label>
          <label class="lrow"><input type="checkbox"><i class="ln sand"></i>majrivers</label>
          <label class="lrow"><input type="checkbox"><i class="sw hot"></i>landice</label>
          <label class="lrow"><input type="checkbox"><i class="sw lime"></i>lakes</label>
          <label class="lrow"><input type="checkbox" aria-label="layer"><i class="sw violet"></i></label>
        </div>
        <div class="scroll"><i class="thumb t-layers"></i></div>
      </div>
    </section>
  </aside>

  <section class="canvas"><svg id="map" role="img" aria-label="Map of tree cover"></svg></section>

  <aside class="dock dock-right">
    <section class="panel">
      <div class="panel-head"><h2>Processing Toolbox</h2><button class="close" aria-label="Close Toolbox"><svg><use href="#closex"/></svg></button></div>
      <div class="minibar right">
        <i class="pressed-edge"></i><i class="sep"></i><button aria-label="Edit Features In-Place"><svg><use href="#noteedit"/></svg></button><i class="sep"></i><button aria-label="Options"><svg><use href="#wrench"/></svg></button>
      </div>
      <input class="toolsearch" type="text" aria-label="Search tools">
      <div class="box toolbox">
        <ul class="algs">
          <li>Recently used</li><li>Cartography</li><li>Database</li><li>File tools</li><li>Interpolation</li><li>Layer tools</li><li>Mesh</li><li>Network analysis</li><li>Plots</li><li>Raster analysis</li><li>Raster creation</li><li>Raster terrain analysis</li><li>Raster tools</li><li>Vector analysis</li><li>Vector creation</li><li>Vector general</li><li>Vector geometry</li><li>Vector overlay</li><li>Vector selection</li><li>Vector table</li><li>Vector tiles</li>
        </ul>
        <div class="scroll"><i class="thumb t-tools"></i></div>
      </div>
    </section>
    <section class="panel results">
      <div class="panel-head"><h2>Results Viewer</h2><button class="close" aria-label="Close Results"><svg><use href="#closex"/></svg></button></div>
      <div class="box res-top"></div>
      <div class="splitter"></div>
      <div class="box grow"></div>
    </section>
  </aside>
</main>

<footer class="status">
  <label class="locator"><svg><use href="#search"/></svg><input type="text" placeholder="Type to locate (Ctrl+K)" aria-label="Locate"></label>
  <span class="hint">Toggles the editing state of the current layer</span>
  <label class="lbl" for="coord">Coordinate</label>
  <input id="coord" class="coord" type="text" value="-2633050,4986503">
  <svg class="sicon track"><use href="#tracker"/></svg>
  <label class="lbl" for="scale">Scale</label>
  <div class="dark scalebox"><select id="scale"><option>10263182</option></select><i class="drop"></i></div>
  <svg class="sicon lock"><use href="#lock"/></svg>
  <label class="lbl" for="mag-in">Magnifier</label>
  <div class="dark spin"><input id="mag-in" type="text" value="100%"><i class="updown"></i></div>
  <label class="lbl rot" for="rot-in">Rotation</label>
  <div class="dark spin"><input id="rot-in" type="text" value="0,0 °"><i class="updown"></i></div>
  <label class="lbl render"><input type="checkbox" checked>Render</label>
  <button class="epsg"><svg class="sicon"><use href="#globe"/></svg>EPSG:2964</button>
  <svg class="sicon msgs"><use href="#msgs"/></svg>
</footer>

<div class="dialog" role="dialog" aria-label="Layer Properties">
  <div class="dlg-title"><svg class="logo"><use href="#qgis"/></svg><span>Layer Properties — trees — Symbology</span><button aria-label="Close dialog"><svg viewBox="0 0 10 10"><path d="M0 0l10 10M10 0L0 10"/></svg></button></div>
  <div class="dlg-body">
    <div class="side">
      <label class="finder"><svg><use href="#search"/></svg><i class="caret"></i><input type="text" aria-label="Search properties"></label>
      <nav class="nav">
        <button><svg><use href="#info"/></svg>Information</button>
        <button><svg><use href="#source"/></svg>Source</button>
        <button class="on"><svg><use href="#symbology"/></svg>Symbology</button>
        <button class="tag-yellow"><svg><use href="#tag"/></svg>Labels</button>
        <button><svg><use href="#mask"/></svg>Masks</button>
        <button><svg><use href="#cube"/></svg>3D View</button>
        <button><svg><use href="#diagram"/></svg>Diagrams</button>
        <button><svg><use href="#fields"/></svg>Fields</button>
        <button><svg><use href="#form"/></svg>Attributes Form</button>
        <button><svg><use href="#join"/></svg>Joins</button>
        <button><svg><use href="#storage"/></svg>Auxiliary Storage</button>
        <button><svg><use href="#actions"/></svg>Actions</button>
        <button><svg><use href="#bubble"/></svg>Display</button>
        <button><svg><use href="#brush"/></svg>Rendering</button>
        <button><svg><use href="#clock"/></svg>Temporal</button>
        <button><svg><use href="#eps"/></svg>Variables</button>
        <button><svg><use href="#meta"/></svg>Metadata</button>
        <button><svg><use href="#deps"/></svg>Dependencies</button>
        <button><svg><use href="#legend"/></svg>Legend</button>
        <button><svg><use href="#server"/></svg>QGIS Server</button>
        <button><svg><use href="#digit"/></svg>Digitizing</button>
      </nav>
    </div>
    <div class="content">
      <div class="dark renderer"><svg><use href="#categ"/></svg><select aria-label="Renderer"><option>Categorized</option></select><i class="drop"></i></div>
      <div class="field f-value"><label for="val">Value</label><div class="dark"><span class="abc">abc</span><select id="val"><option>VEGDESC</option></select><i class="drop"></i></div><button class="btn expr" aria-label="Expression"><svg><use href="#eps"/></svg></button></div>
      <div class="field f-symbol"><label for="sym">Symbol</label><div class="dark"><button id="sym" class="symbol" aria-label="Change symbol"></button><i class="drop"></i></div></div>
      <div class="field f-ramp"><label for="ramp">Color ramp</label><div class="dark"><select id="ramp" class="ramp"><option>Random colors</option></select><i class="drop"></i></div></div>
      <div class="classes">
        <table>
          <thead><tr><th class="c1"><span>Symbol</span><i class="drop"></i></th><th class="c2">Value</th><th>Legend</th></tr></thead>
          <tbody>
            <tr><td><input type="checkbox" checked aria-label="Deciduous"><i class="sw blue"></i></td><td>Deciduous</td><td>Deciduous</td></tr>
            <tr><td><input type="checkbox" checked aria-label="Evergreen"><i class="sw tan"></i></td><td>Evergreen</td><td>Evergreen</td></tr>
            <tr><td><input type="checkbox" checked aria-label="Mixed Trees"><i class="sw green"></i></td><td>Mixed Trees</td><td>Mixed Trees</td></tr>
            <tr><td><input type="checkbox" checked aria-label="Others"><i class="sw magenta"></i></td><td><em>all other values</em></td><td></td></tr>
          </tbody>
        </table>
      </div>
      <div class="actions"><button class="btn">Classify</button><button class="btn sq" aria-label="Add"><svg><use href="#plus"/></svg></button><button class="btn sq" aria-label="Remove"><svg><use href="#minus"/></svg></button><button class="btn">Delete All</button><button class="btn menu push">Advanced<i></i></button></div>
      <button class="group"><i></i>Layer Rendering</button>
      <div class="buttons"><button class="btn menu">Style<i></i></button><button class="btn push">OK</button><button class="btn">Cancel</button><button class="btn">Apply</button><button class="btn">Help</button></div>
    </div>
  </div>
</div>
<script src="map.js"></script>
</body>
</html>
```
FILE: styles.css
```css
:root {
  --bg: #717171;
  --field: #b1b1b1;
  --dark: #353535;
  --line: #363636;
  --ink: #141414;
}
* { box-sizing: border-box; }
body {
  margin: 0;
  height: 100vh;
  display: flex;
  flex-direction: column;
  overflow: hidden;
  background: var(--bg);
  color: var(--ink);
  font: 11px/16px "Open Sans", "Noto Sans", sans-serif;
}
button, input, select { font: inherit; color: inherit; background: none; border: 0; margin: 0; padding: 0; outline: 0; min-width: 0; }
select { appearance: none; }
ul { list-style: none; margin: 0; padding: 0; }
h2 { margin: 0; font: inherit; }
i { display: block; flex: none; }
svg { flex: none; display: block; }
.sprite { position: absolute; width: 0; height: 0; }

/* title and menu */
.titlebar { height: 23px; flex: none; display: flex; align-items: center; background: #fff; color: #8c8c8c; padding-left: 2px; }
.logo { width: 16px; height: 16px; margin-right: 6px; }
.winctl { margin-left: auto; display: flex; }
.winctl button { width: 46px; height: 20px; display: grid; place-items: center; }
.winctl svg, .dlg-title button svg { width: 10px; height: 10px; fill: none; stroke: #8c8c8c; overflow: visible; }
.menubar { height: 20px; flex: none; display: flex; background: var(--dark); color: #b4b4b4; padding-left: 3px; }
.menubar button { padding: 0 7px; line-height: 20px; }
u { text-underline-offset: 2px; }

/* toolbars */
.toolrow { height: 39px; display: flex; align-items: center; padding-bottom: 2px; }
.tool { width: 34px; height: 34px; display: grid; place-items: center; flex: none; }
.tool svg { width: 23px; height: 23px; }
.tool.pressed { border: 1px solid #eee; border-radius: 5px; background: #7a7a7a; }
.tool:disabled svg { opacity: .3; filter: grayscale(.6); }
.grip { width: 9px; height: 13px; border-right: 2px solid #a8a8a8; }
.grip.first { width: 6px; }
.sep { width: 5px; height: 11px; border-right: 1px solid #4c4c4c; }
.drop { width: 16px; height: 5px; background: #adadad; clip-path: polygon(5px 0, 11px 0, 8px 100%); }
.tag-yellow svg { fill: #fbe14a; stroke: #222; color: #b08e0c; }
.tag-blue svg { fill: #d7e6f7; stroke: #26486f; color: #5b8cc6; }
.tag-red svg { fill: #fbdcdc; stroke: #e01818; color: #e01818; }
.tag-grey svg { fill: #a8a284; stroke: #222; color: #777; }

/* workspace */
.workspace { flex: 1; min-height: 0; display: flex; }
.dock { display: flex; flex-direction: column; flex: none; }
.dock-left { width: 300px; padding-right: 6px; }
.dock-right { width: 304px; padding-left: 6px; }
.panel { display: flex; flex-direction: column; flex: none; min-height: 0; }
.layers-panel { flex: 1; padding-top: 6px; }
.panel-head { height: 20px; display: flex; align-items: center; flex: none; padding-right: 2px; }
.panel-head h2 { flex: 1; text-align: center; padding-right: 12px; line-height: 20px; }
.dock-right h2 { padding-right: 8px; }
.close { width: 12px; height: 12px; margin-bottom: 4px; }
.close svg { width: 12px; height: 12px; }
.minibar { height: 29px; flex: none; display: flex; align-items: center; padding: 0 0 3px 2px; }
.minibar button { width: 26px; height: 26px; display: grid; place-items: center; }
.minibar svg { width: 15px; height: 15px; }
.box { display: flex; background: var(--field); border: 1px solid var(--line); border-radius: 3px; overflow: hidden; flex: none; padding: 1px; }
.box.grow { flex: 1; min-height: 0; }
.browser-box { height: 135px; }
.browser, .layers, .algs { flex: 1; min-width: 0; }
.browser { padding-top: 1px; }
.browser li { height: 18px; display: flex; align-items: center; }
.browser svg { width: 16px; height: 16px; margin-right: 6px; }
.tw { width: 5px; height: 6px; background: #6a6a6a; clip-path: polygon(0 0, 100% 50%, 0 100%); margin: 0 9px 0 5px; }
.tw.none { visibility: hidden; }
.scroll { width: 11px; background: var(--dark); padding: 1px; flex: none; }
.thumb { background: #707070; width: 100%; }
.t-browser { height: 37%; }
.t-layers { height: 80%; }
.t-tools { height: 95%; }

.lrow { height: 22px; display: flex; align-items: center; gap: 7px; padding-left: 24px; font-size: 12px; font-weight: 700; font-style: italic; }
.lrow u { font-size: 11px; font-style: normal; }
.lrow .sw, .lrow svg, .ln, .pt { margin-right: -1px; }
.lrow svg { width: 16px; height: 16px; }
.lrow.active { background: #f0f0f0; padding-left: 7px; }
.lrow .tw.open { width: 8px; height: 6px; clip-path: polygon(0 0, 100% 0, 50% 100%); margin: 0 2px 0 0; }
.lrow.sub { height: 24px; padding-left: 44px; font-size: 11px; font-weight: 400; font-style: normal; }
.lrow.sub .sw { width: 18px; height: 18px; }
input[type=checkbox] { appearance: none; width: 16px; height: 16px; flex: none; border: 1px solid #3a3a3a; border-radius: 5px; display: grid; place-items: center; }
input[type=checkbox]:checked::before { content: ""; width: 11px; height: 11px; background: #333; clip-path: polygon(0 55%, 20% 50%, 38% 72%, 88% 0, 100% 4%, 42% 100%); }
.sw { width: 16px; height: 16px; border: 1px solid rgba(40, 40, 40, .55); }
.ln { width: 16px; height: 2px; }
.pt { width: 8px; height: 8px; border: 1px solid #555; border-radius: 50%; margin-left: 4px; }
.lrow .pt { margin-right: 3px; }
.purple { background: #8c5798; } .blue { background: #6485d6; } .tan { background: #c5a957; } .green { background: #3cd95c; }
.magenta { background: #d621ab; } .sage { background: #8ba08b; } .mustard { background: #d3b338; } .brown { background: #a66f55; }
.slate { background: #7d898c; } .moss { background: #729b6f; } .sand { background: #c3b06c; } .pink { background: #e96d8a; }
.mauve { background: #bc97a2; } .rose { background: #f2a0aa; } .amber { background: #e6b431; } .berry { background: #c77a92; }
.leaf { background: #98b088; } .orange { background: #ff9e17; } .beige { background: #beb297; } .brick { background: #b5706e; }
.hot { background: #e15989; } .lime { background: #bbce4d; } .violet { background: #8a6db5; }

.canvas { flex: 1; min-width: 0; background: #fff; border: 1px solid #555; overflow: hidden; }
.canvas svg { width: 100%; height: 100%; }

.minibar.right { padding-left: 90px; }
.pressed-edge { width: 16px; height: 24px; border: 1px solid #eee; border-left: 0; border-radius: 0 5px 5px 0; }
.toolsearch { height: 22px; background: var(--field); border: 1px solid var(--line); border-radius: 3px; }
.toolbox { height: 430px; }
.algs { padding: 1px 0 0 46px; }
.algs li { height: 18px; line-height: 18px; }
.results { flex: 1; }
.results .panel-head { height: 24px; padding-top: 6px; }
.res-top { height: 192px; }
.splitter { height: 4px; flex: none; align-self: center; width: 17px; border-bottom: 2px dotted #bbb; margin-bottom: 1px; }

/* status bar */
.status { height: 31px; flex: none; display: flex; align-items: center; padding: 0 8px 0 4px; }
.locator { width: 200px; height: 22px; display: flex; align-items: center; gap: 9px; padding-left: 9px; background: var(--field); border: 1px solid var(--line); border-radius: 4px; }
.locator svg, .finder svg { width: 12px; height: 12px; }
.locator input { flex: 1; }
::placeholder { color: #5a5a5a; opacity: 1; }
.hint { color: #9a9a9a; margin-left: 9px; }
.lbl { margin-right: 3px; }
.hint + .lbl { margin-left: auto; }
.coord { width: 106px; height: 22px; background: var(--field); border: 1px solid var(--line); border-radius: 4px; padding-left: 6px; }
.sicon { width: 14px; height: 14px; }
.track { margin: 0 12px 0 5px; }
.dark { height: 22px; display: flex; align-items: center; border: 1px solid #232323; border-radius: 4px; background: linear-gradient(#525252, #383838); color: #b4b4b4; }
.dark select, .dark input { flex: 1; height: 100%; }
.scalebox { width: 98px; padding-left: 6px; }
.lock { margin: 0 7px 0 11px; }
.spin { width: 84px; padding: 0 6px 0 4px; }
.rot { margin: 0 9px 0 7px; }
.updown { width: 6px; height: 12px; background: #bdbdbd; clip-path: polygon(50% 0, 100% 40%, 0 40%, 0 60%, 100% 60%, 50% 100%, 0 60%, 0 40%); }
.render { display: flex; align-items: center; gap: 6px; margin: 0 14px 0 6px; }
.render input { background: var(--field); }
.epsg { display: flex; align-items: center; gap: 2px; margin-right: 21px; }

/* properties dialog */
.dialog { position: absolute; left: 898px; top: 91px; width: 827px; height: 893px; display: flex; flex-direction: column; background: var(--bg); border: 1px solid #484848; box-shadow: 0 4px 18px rgba(0, 0, 0, .45); }
.dlg-title { height: 30px; flex: none; display: flex; align-items: center; background: #fff; color: #000; padding-left: 8px; }
.dlg-title .logo { margin-right: 5px; }
.dlg-title button { margin-left: auto; width: 30px; height: 30px; display: grid; place-items: center; }
.dlg-title button svg { stroke: #000; }
.dlg-body { flex: 1; min-height: 0; display: flex; }
.side { width: 150px; display: flex; flex-direction: column; gap: 6px; }
.finder { height: 22px; background: var(--field); border: 1px solid #c9c9c9; border-radius: 4px; display: flex; align-items: center; padding-left: 8px; }
.finder input { flex: 1; }
.caret { width: 1px; height: 12px; background: #222; margin-left: 10px; }
.nav { flex: 1; display: flex; flex-direction: column; background: var(--dark); border-radius: 3px; padding: 2px; }
.nav button { height: 34px; display: flex; align-items: center; gap: 7px; padding-left: 6px; color: #b4b4b4; text-align: left; }
.nav svg { width: 26px; height: 26px; }
.nav .on { background: #f0f0f0; color: #111; }
.content { flex: 1; min-width: 0; display: flex; flex-direction: column; padding: 3px 4px 3px 4px; }
.renderer { height: 24px; padding-left: 5px; }
.renderer svg { width: 15px; height: 15px; margin-right: 6px; }
.field { display: flex; align-items: center; margin-top: 6px; }
.field label { width: 58px; flex: none; font-size: 10px; }
.field .dark { flex: 1; height: 100%; }
.f-value { height: 25px; }
.f-symbol { height: 27px; }
.f-ramp { height: 22px; }
.abc { color: #555; font-weight: 700; width: 21px; margin-left: 4px; font-size: 9px; }
.symbol { flex: 1; height: 20px; margin-left: 2px; background: #f4a5b2; border: 1px solid #a87580; }
.f-symbol .dark, .f-ramp .dark { border-color: #333; }
.ramp { text-align: center; text-align-last: center; color: #999; font-size: 10px; }
.btn { height: 23px; padding: 0 3px; border: 1px solid #3a3a3a; border-radius: 4px; background: linear-gradient(#a0a0a0, #868686); display: flex; align-items: center; justify-content: center; }
.expr { width: 24px; height: 25px; margin-left: 6px; }
.expr svg { width: 15px; height: 15px; }
.classes { flex: 1; margin-top: 6px; background: var(--field); border: 1px solid #333; border-radius: 3px; padding: 2px; }
table { width: 100%; border-collapse: collapse; table-layout: fixed; }
th { height: 24px; padding: 0 4px; text-align: left; font-weight: 400; background: var(--bg); border-bottom: 1px solid #333; line-height: 14px; }
th + th { border-left: 1px solid #333; }
.c1 { width: 74px; }
.c2 { width: 86px; }
.c1 span, .c1 .drop { display: inline-block; vertical-align: middle; }
.c1 .drop { margin-left: 11px; }
td { height: 24px; padding: 0 3px; vertical-align: top; line-height: 20px; }
td:first-child { display: flex; align-items: center; gap: 7px; padding-top: 1px; }
.actions { height: 26px; margin-top: 7px; display: flex; align-items: center; gap: 6px; }
.sq { width: 30px; height: 26px; }
.sq svg { width: 16px; height: 16px; }
.push { margin-left: auto; }
.menu i { width: 8px; height: 4px; background: #3a3a3a; clip-path: polygon(0 0, 100% 0, 50% 100%); margin: 8px -2px 0 6px; }
.group { display: flex; align-items: center; font-weight: 700; height: 16px; margin: 7px 0 9px; padding-left: 5px; gap: 9px; }
.group i { width: 7px; height: 10px; background: #2c2c2c; clip-path: polygon(0 0, 100% 50%, 0 100%); }
.buttons { display: flex; gap: 6px; }
```
FILE: map.js
```js
// Draws the categorized tree layer: coarse outlines are roughened into coastlines.
(function () {
  var NS = 'http://www.w3.org/2000/svg';
  var svg = document.getElementById('map');
  var B = '#6485d6', T = '#c5a957', G = '#3cd95c', W = '#ffffff', K = '#39433e';
  var seed = 41;
  function rnd() { seed = (seed * 16807) % 2147483647; return seed / 2147483647; }
  function el(name, attrs, parent) {
    var e = document.createElementNS(NS, name);
    for (var k in attrs) e.setAttribute(k, attrs[k]);
    parent.appendChild(e);
    return e;
  }
  // Long spans bend a little, short spans bend more, so coasts stay in place but look ragged.
  function rough(pts, amt, close) {
    for (var n = 0; n < 5; n++) {
      var out = [], len = close ? pts.length : pts.length - 1;
      for (var i = 0; i < len; i++) {
        var a = pts[i], b = pts[(i + 1) % pts.length];
        var dx = b[0] - a[0], dy = b[1] - a[1], d = Math.hypot(dx, dy);
        out.push(a);
        if (d > 9) {
          var k = (rnd() - .5) * amt * Math.min(1, .2 + 14 / d);
          out.push([(a[0] + b[0]) / 2 - dy * k, (a[1] + b[1]) / 2 + dx * k]);
        }
      }
      if (!close) out.push(pts[pts.length - 1]);
      pts = out;
    }
    return pts;
  }
  function toPath(pts, close) {
    return 'M' + pts.map(function (p) { return p[0].toFixed(1) + ' ' + p[1].toFixed(1); }).join('L') + (close ? 'Z' : '');
  }
  function read(s) { return s.split(' ').map(function (p) { return p.split(',').map(Number); }); }
  var root = el('g', { transform: 'translate(59 149) scale(.3333)', 'stroke-linejoin': 'round', stroke: K, 'stroke-width': 2.6 }, svg);
  var clip = el('clipPath', { id: 'edge' }, root);
  el('path', { d: 'M0 0H1336L1498 835V1200H0Z' }, clip);
  var g = el('g', { 'clip-path': 'url(#edge)' }, root);
  function poly(c, s, amt) { el('path', { d: toPath(rough(read(s), amt || 1.3, true), true), fill: c }, g); }
  function blob(x, y, r) {
    var p = [], n = 5 + Math.floor(rnd() * 4), sx = .7 + rnd() * 1.4, sy = .4 + rnd() * .6, t = -.6 + rnd() * .5;
    for (var i = 0; i < n; i++) {
      var a = i / n * 6.283, q = r * (.3 + rnd()), u = Math.cos(a) * q * sx, v = Math.sin(a) * q * sy;
      p.push([x + u * Math.cos(t) - v * Math.sin(t), y + u * Math.sin(t) + v * Math.cos(t)]);
    }
    return toPath(rough(p, 1, true), true);
  }
  function scatter(colors, area, n, r, sw) {
    var P = read(area), xs = P.map(function (p) { return p[0]; }), ys = P.map(function (p) { return p[1]; });
    var x0 = Math.min.apply(0, xs), x1 = Math.max.apply(0, xs), y0 = Math.min.apply(0, ys), y1 = Math.max.apply(0, ys);
    for (var i = 0, tries = 0; i < n && tries < 9000; tries++) {
      var x = x0 + rnd() * (x1 - x0), y = y0 + rnd() * (y1 - y0), inside = false;
      for (var a = 0, b = P.length - 1; a < P.length; b = a++) {
        if ((P[a][1] > y) !== (P[b][1] > y) && x < (P[b][0] - P[a][0]) * (y - P[a][1]) / (P[b][1] - P[a][1]) + P[a][0]) inside = !inside;
      }
      if (!inside) continue;
      i++;
      el('path', { d: blob(x, y, r * (.4 + rnd())), fill: colors[Math.floor(rnd() * colors.length)], 'stroke-width': sw || 2.2 }, g);
    }
  }
  // western and central blue body
  poly(B, '480,330 510,300 560,285 610,285 622,262 680,265 740,268 780,240 860,240 872,262 925,265 930,310 900,325 880,400 850,500 620,560 560,620 480,640 430,710 400,740 360,760 330,790 250,835 255,815 320,770 345,750 370,700 375,660 392,640 378,600 395,520 412,525 412,570 440,590 480,580 510,560 525,520 520,500 490,490 480,455 470,430 480,400');
  poly(B, '340,375 385,345 400,390 440,400 480,410 478,440 430,440 460,475 420,505 390,490 350,480 320,445 380,450 390,410 355,400');
  poly(B, '250,350 305,355 300,385 318,410 310,445 292,410 285,370');
  poly(B, '140,350 195,352 235,338 222,378 205,360 170,365'); poly(B, '222,322 240,303 260,315 240,328');
  poly(B, '150,422 190,420 230,405 195,440 165,432'); poly(B, '137,512 160,485 205,500 195,515 165,522');
  poly(B, '220,520 240,475 270,455 298,470 265,475 270,500 250,525'); poly(B, '282,545 300,510 350,485 385,490 335,525 290,555');
  poly(B, '436,285 465,240 485,205 500,225 525,230 500,250 510,280 470,288'); poly(B, '548,240 570,225 595,262 570,252');
  poly(B, '418,135 460,130 480,98 510,100 515,85 530,118 568,128 562,155 530,140 500,150 460,148 425,152');
  poly(B, '525,180 550,172 555,190'); poly(B, '645,135 670,140 655,155'); poly(B, '736,185 775,195 775,212 750,203');
  poly(B, '245,778 275,730 302,715 305,750 275,790'); poly(B, '340,810 355,800 392,822 370,865 342,868');
  poly(G, '835,132 850,155 870,152 855,170 838,158'); poly(G, '160,755 185,765 200,762 185,805 172,795');
  // evergreen
  poly(T, '460,680 480,640 560,620 590,600 620,560 700,530 790,500 850,500 930,540 960,560 900,600 850,620 840,680 800,710 770,750 750,800 700,820 690,870 720,930 715,980 760,1000 700,1030 650,1055 660,1010 640,990 630,900 600,890 590,830 560,790 520,740');
  poly(T, '575,400 640,390 700,405 745,405 730,430 670,460 670,500 620,530 600,555 520,600 515,580 560,520 545,440');
  poly(T, '775,330 840,310 845,250 885,250 890,300 865,340 880,380 830,380 790,375');
  poly(T, '680,335 735,350 715,375 690,360'); poly(B, '505,620 545,600 620,570 600,592 560,625 520,630');
  poly(T, '450,780 480,760 530,770 560,800 520,830 480,820 460,830'); poly(T, '520,880 560,850 600,880 575,915 530,900');
  poly(T, '455,920 465,870 505,880 480,925'); poly(G, '540,345 580,345 610,320 650,370 600,365 560,368');
  poly(G, '560,460 598,458 580,495 565,485');
  // eastern body
  poly(G, '985,290 1010,240 985,215 1050,220 1110,160 1150,180 1170,140 1240,95 1290,70 1300,50 1335,60 1341,35 1600,35 1800,300 1800,700 1600,850 1490,828 1440,790 1390,770 1370,710 1330,690 1230,640 1130,645 1080,600 1030,600 1020,640 960,690 920,715 870,740 810,770 800,800 740,840 710,850 700,900 690,850 750,800 770,740 840,670 850,600 900,560 940,520 880,450 845,400 890,340 910,370 940,330 985,330');
  poly(B, '1335,65 1370,200 1390,380 1330,370 1340,250 1270,260 1290,200 1310,150 1270,110 1300,65');
  poly(B, '1140,185 1170,145 1240,95 1250,120 1200,170 1150,195'); poly(B, '1050,205 1110,160 1140,185 1090,230 1050,230');
  poly(T, '1030,545 1110,540 1180,570 1240,560 1330,620 1370,660 1475,700 1480,730 1380,690 1290,640 1190,615 1090,600 1040,590');
  scatter([B, G, T, G, G, T], '900,380 1000,250 1110,190 1200,180 1320,240 1390,300 1410,440 1250,480 1000,560 900,600 850,480', 230, 18);
  scatter([B, B, G, T, G], '1070,200 1290,110 1350,130 1390,340 1290,340 1200,260', 60, 17);
  scatter([K, G, T, W, B], '990,360 1150,270 1240,300 1100,350', 60, 8);
  scatter([T, G, B, T, G], '850,500 960,500 1130,530 1270,590 1200,620 1020,620 950,650 840,700', 110, 16);
  scatter([T, T, G], '1100,560 1240,590 1350,640 1370,670 1200,620', 28, 12);
  scatter([G, T, W], '700,720 820,580 930,540 850,690 760,760', 20, 12);
  scatter([B, G, T, G], '1230,430 1410,430 1420,480 1310,500', 24, 14);
  scatter([B, B, W, K], '500,330 880,260 860,480 520,400', 50, 4, 2);
  scatter([T, T, B, K, T, G], '550,400 700,390 670,500 520,590', 80, 7, 2);
  scatter([T, G, B], '530,760 600,780 720,860 720,1010 630,1010 600,900', 40, 13);
  scatter([T, T, W], '480,670 620,560 830,520 780,740 620,880', 110, 3, 2);
  scatter([K, G, B], '560,330 880,270 880,470', 40, 4, 2);
  poly(B, '1060,440 1110,400 1120,415 1235,440 1230,470 1140,460 1065,460'); poly(B, '1010,520 1110,490 1130,510 1050,530 980,500');
  poly(B, '670,470 790,385 840,400 880,450 840,480 760,500 640,530 660,490');
  poly(G, '985,330 1000,270 1070,250 1130,265 1120,300 1040,320'); poly(G, '1150,490 1240,470 1290,520 1260,570 1190,530');
  poly(G, '845,405 880,390 930,415 905,440 865,435'); poly(G, '1310,510 1430,490 1560,660 1420,680 1320,610');
  poly(G, '1100,390 1160,360 1230,390 1200,410 1130,405'); poly(G, '1165,225 1230,190 1270,220 1200,255');
  poly(G, '770,775 830,690 920,630 925,700 850,745');
  poly(G, '1340,700 1390,690 1480,740 1495,825 1400,770');
  poly(G, '740,655 790,635 812,600 800,640 760,670 715,700');
  poly(B, '1295,75 1337,60 1352,160 1320,150 1290,110'); poly(B, '1300,210 1350,205 1345,250 1290,250');
  scatter([K, G], '1320,520 1430,510 1450,660 1380,660', 24, 3, 2);
  // southern pieces
  poly(G, '1185,700 1260,715 1330,700 1370,760 1390,790 1340,800 1290,770 1260,830 1300,880 1410,905 1405,935 1330,915 1280,895 1230,880 1175,855 1205,830 1180,790 1130,790 1130,770 1215,770 1220,730');
  poly(G, '1445,825 1470,815 1465,850'); poly(G, '1030,655 1062,662 1045,680'); poly(G, '1060,700 1075,700 1072,722 1058,712');
  poly(B, '860,830 920,870 940,820 965,785 998,805 985,900 1000,915 1075,890 1010,950 985,970 930,965 870,1030 848,1090 845,1030 880,980 900,930 865,880');
  poly(B, '912,1045 960,1000 1000,1010 985,1060 965,1085 925,1060'); poly(B, '895,1120 912,1060 920,1070 912,1115'); poly(B, '980,985 1015,955 1005,990');
  scatter([B], '890,880 980,820 985,940 910,940', 10, 5); scatter([B, K], '920,1030 990,1010 960,1070', 14, 6);
  poly(G, '555,995 590,920 650,960 630,1015 580,1040'); poly(T, '645,1040 700,1030 715,1060 660,1060');
  poly(G, '370,1050 395,1000 420,980 440,1020 410,1055 385,1095'); poly(G, '465,945 510,935 490,985'); poly(G, '430,1080 460,1062 445,1110');
  poly(G, '622,1115 660,1105 700,1120 660,1125'); poly(T, '655,1075 690,1090 680,1105'); poly(T, '715,1118 742,1100 735,1112');
  poly(T, '750,990 765,960 762,1000 735,1005');
  scatter([G, T, B], '450,750 590,760 600,920 450,900', 26, 12);
  scatter([G, B], '345,770 395,830 365,860', 10, 9); scatter([G], '715,850 800,840 780,900', 7, 9);
  scatter([G], '1130,765 1210,780 1160,800', 8, 9); scatter([G, W], '1340,720 1400,780 1380,820', 8, 9);
  scatter([G, W], '1240,740 1340,730 1260,800', 14, 4, 2);
  // scattered islands
  g = el('g', {}, root);
  poly(G, '1315,1045 1340,1040 1360,1060 1370,1072 1330,1062'); poly(G, '1395,1065 1410,1045 1435,1050 1420,1062'); poly(B, '1355,1070 1375,1068 1368,1084');
  poly(G, '1248,1037 1280,1045 1265,1050'); poly(G, '1440,1054 1475,1058 1450,1062'); poly(G, '1522,1060 1560,1078 1530,1080'); poly(G, '1575,1070 1600,1074 1585,1078');
  poly(G, '1098,1045 1110,1055 1103,1068'); poly(G, '288,875 305,868 300,884'); poly(G, '495,1060 508,1070 498,1078'); poly(G, '1010,828 1026,830 1018,845');
  poly(G, '550,1345 590,1348 580,1362 560,1354'); poly(G, '573,1410 590,1414 580,1425'); poly(G, '622,1215 650,1205 675,1208 645,1224'); poly(G, '430,1135 442,1138 436,1146');
  poly(G, '235,1620 262,1606 275,1620 302,1618 282,1636 262,1660 240,1640'); poly(G, '345,1550 368,1545 378,1562 360,1558'); poly(G, '398,1556 412,1560 402,1568');
  poly(T, '42,1701 52,1692 72,1692 81,1701 70,1708 52,1706', .4); poly(G, '15,1706 25,1712 38,1711 28,1720', .4);
  // rivers
  [['790,487 860,497 885,530 940,518 960,545 1030,545', 4], ['1000,365 1080,330 1150,290 1190,298 1255,360 1257,385 1280,430', 5], ['600,552 700,525 790,490', 2], ['925,690 945,650 955,620', 8]].forEach(function (r) {
    var d = toPath(rough(read(r[0]), .5, false), false);
    el('path', { d: d, fill: 'none', 'stroke-width': r[1] + 3 }, g);
    el('path', { d: d, fill: 'none', stroke: W, 'stroke-width': r[1] }, g);
  });
  ['962,500 966,665', '975,790 985,970', '890,865 960,940 978,860', '1340,35 1496,830', '1240,840 1265,875 1330,905', '620,890 655,790 710,760', '655,810 660,775 715,745'].forEach(function (s) {
    el('path', { d: toPath(read(s), false), fill: 'none' }, g);
  });
})();
```
